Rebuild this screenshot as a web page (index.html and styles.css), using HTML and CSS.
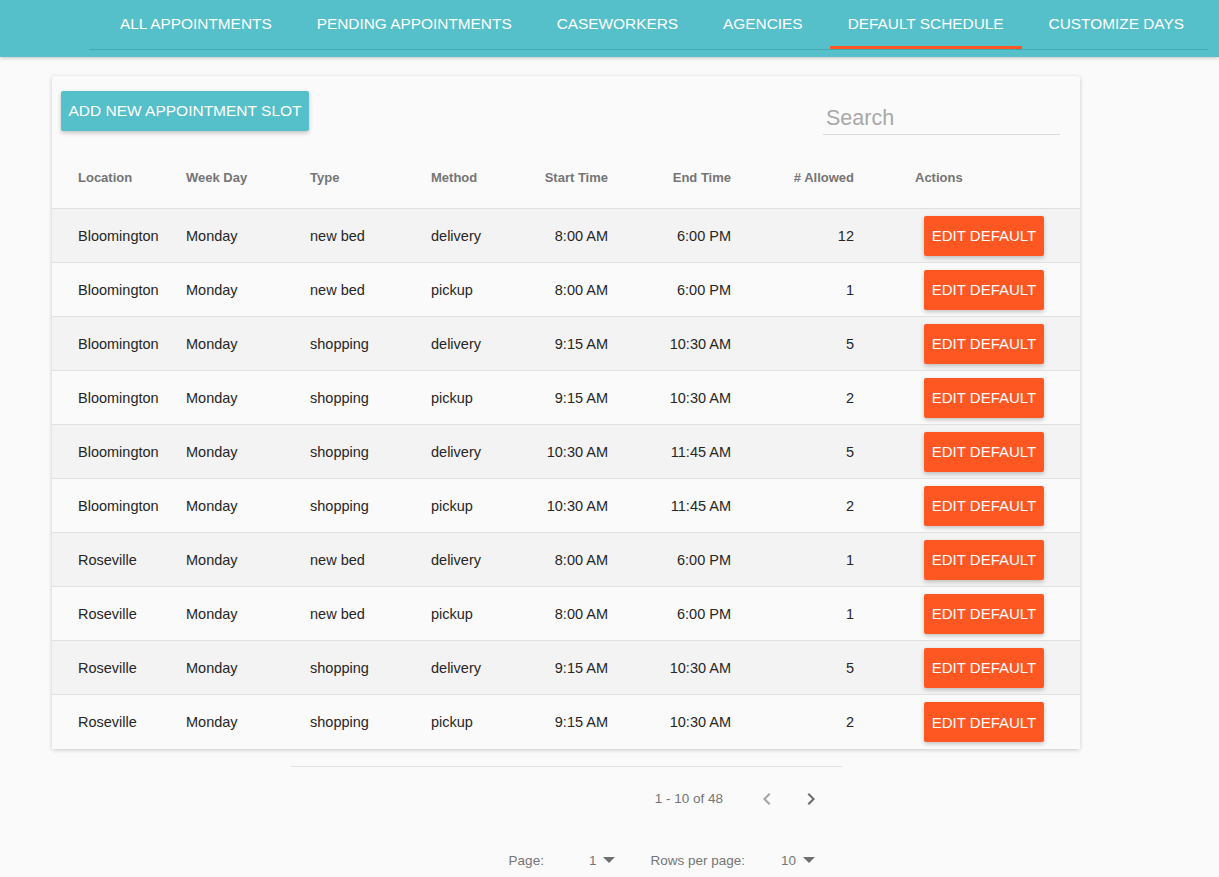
FILE: index.html
```html
<!DOCTYPE html>
<html>
<head>
<meta charset="utf-8">
<link rel="stylesheet" href="styles.css">
</head>
<body>
<header class="appbar">
  <nav class="tabs">
    <a class="tab">All Appointments</a>
    <a class="tab">Pending Appointments</a>
    <a class="tab">Caseworkers</a>
    <a class="tab">Agencies</a>
    <a class="tab active">Default Schedule</a>
    <a class="tab">Customize Days</a>
  </nav>
</header>

<main class="content">
  <section class="card">
    <div class="toolbar">
      <button class="btn btn-teal">Add New Appointment Slot</button>
      <div class="search"><span class="search-placeholder">Search</span></div>
    </div>
    <div class="table">
      <div class="row head">
        <div class="cell">Location</div>
        <div class="cell">Week Day</div>
        <div class="cell">Type</div>
        <div class="cell">Method</div>
        <div class="cell num">Start Time</div>
        <div class="cell num">End Time</div>
        <div class="cell num"># Allowed</div>
        <div class="cell actions">Actions</div>
      </div>
      <div class="row odd"><div class="cell">Bloomington</div><div class="cell">Monday</div><div class="cell">new bed</div><div class="cell">delivery</div><div class="cell num">8:00 AM</div><div class="cell num">6:00 PM</div><div class="cell num">12</div><div class="cell actions"><button class="btn btn-orange">Edit Default</button></div></div>
      <div class="row"><div class="cell">Bloomington</div><div class="cell">Monday</div><div class="cell">new bed</div><div class="cell">pickup</div><div class="cell num">8:00 AM</div><div class="cell num">6:00 PM</div><div class="cell num">1</div><div class="cell actions"><button class="btn btn-orange">Edit Default</button></div></div>
      <div class="row odd"><div class="cell">Bloomington</div><div class="cell">Monday</div><div class="cell">shopping</div><div class="cell">delivery</div><div class="cell num">9:15 AM</div><div class="cell num">10:30 AM</div><div class="cell num">5</div><div class="cell actions"><button class="btn btn-orange">Edit Default</button></div></div>
      <div class="row"><div class="cell">Bloomington</div><div class="cell">Monday</div><div class="cell">shopping</div><div class="cell">pickup</div><div class="cell num">9:15 AM</div><div class="cell num">10:30 AM</div><div class="cell num">2</div><div class="cell actions"><button class="btn btn-orange">Edit Default</button></div></div>
      <div class="row odd"><div class="cell">Bloomington</div><div class="cell">Monday</div><div class="cell">shopping</div><div class="cell">delivery</div><div class="cell num">10:30 AM</div><div class="cell num">11:45 AM</div><div class="cell num">5</div><div class="cell actions"><button class="btn btn-orange">Edit Default</button></div></div>
      <div class="row"><div class="cell">Bloomington</div><div class="cell">Monday</div><div class="cell">shopping</div><div class="cell">pickup</div><div class="cell num">10:30 AM</div><div class="cell num">11:45 AM</div><div class="cell num">2</div><div class="cell actions"><button class="btn btn-orange">Edit Default</button></div></div>
      <div class="row odd"><div class="cell">Roseville</div><div class="cell">Monday</div><div class="cell">new bed</div><div class="cell">delivery</div><div class="cell num">8:00 AM</div><div class="cell num">6:00 PM</div><div class="cell num">1</div><div class="cell actions"><button class="btn btn-orange">Edit Default</button></div></div>
      <div class="row"><div class="cell">Roseville</div><div class="cell">Monday</div><div class="cell">new bed</div><div class="cell">pickup</div><div class="cell num">8:00 AM</div><div class="cell num">6:00 PM</div><div class="cell num">1</div><div class="cell actions"><button class="btn btn-orange">Edit Default</button></div></div>
      <div class="row odd"><div class="cell">Roseville</div><div class="cell">Monday</div><div class="cell">shopping</div><div class="cell">delivery</div><div class="cell num">9:15 AM</div><div class="cell num">10:30 AM</div><div class="cell num">5</div><div class="cell actions"><button class="btn btn-orange">Edit Default</button></div></div>
      <div class="row last"><div class="cell">Roseville</div><div class="cell">Monday</div><div class="cell">shopping</div><div class="cell">pickup</div><div class="cell num">9:15 AM</div><div class="cell num">10:30 AM</div><div class="cell num">2</div><div class="cell actions"><button class="btn btn-orange">Edit Default</button></div></div>
    </div>
  </section>

  <div class="pager">
    <div class="pager-row range-row">
      <span class="range">1 - 10 of 48</span>
      <span class="chev chev-prev"><svg viewBox="0 0 24 24" width="24" height="24"><path d="M15.41 7.41L14 6l-6 6 6 6 1.41-1.41L10.83 12z"/></svg></span>
      <span class="chev chev-next"><svg viewBox="0 0 24 24" width="24" height="24"><path d="M10 6L8.59 7.41 13.17 12l-4.58 4.59L10 18l6-6z"/></svg></span>
    </div>
    <div class="pager-row select-row">
      <span class="plabel">Page:</span>
      <span class="pselect sel-page">1<i class="caret"></i></span>
      <span class="plabel rows-label">Rows per page:</span>
      <span class="pselect sel-rows">10<i class="caret"></i></span>
    </div>
  </div>
</main>
</body>
</html>
```

FILE: styles.css
```css
* { box-sizing: border-box; }

html, body {
  margin: 0;
  padding: 0;
  background: #fafafa;
  font-family: "Liberation Sans", Arial, sans-serif;
  color: #212121;
}

.appbar {
  height: 57px;
  background: #56c0ca;
  box-shadow: 0 1px 4px rgba(0, 0, 0, 0.22);
  position: relative;
  z-index: 2;
}

.tabs {
  display: flex;
  gap: 9px;
  margin-left: 89px;
  width: 1119px;
  height: 50px;
  padding-left: 13px;
  border-bottom: 1px solid #43a8b2;
}

.tab {
  display: flex;
  align-items: center;
  padding: 2px 18px 0 18px;
  height: 49px;
  color: #ffffff;
  font-size: 15.4px;
  text-transform: uppercase;
  border-bottom: 3px solid transparent;
  white-space: nowrap;
}

.tab.active {
  border-bottom-color: #ff5722;
}

.content {
  padding: 19px 0 0 52px;
}

.card {
  width: 1028px;
  background: #fafafa;
  box-shadow: 0 1px 4px rgba(0, 0, 0, 0.2);
  border-radius: 2px;
}

.toolbar {
  display: flex;
  justify-content: space-between;
  align-items: flex-start;
  height: 70px;
  padding: 15px 20px 0 9px;
}

.btn {
  border: none;
  font-family: "Liberation Sans", Arial, sans-serif;
  text-transform: uppercase;
  color: #ffffff;
  border-radius: 2px;
  cursor: pointer;
  box-shadow: 0 2px 4px rgba(0, 0, 0, 0.22);
}

.btn-teal {
  background: #56c0ca;
  height: 40px;
  width: 248px;
  padding: 0;
  font-size: 15.5px;
}

.search {
  width: 237px;
  height: 44px;
  border-bottom: 1px solid #dcdcdc;
  display: flex;
  align-items: flex-end;
  padding: 0 0 3px 3px;
}

.search-placeholder {
  font-size: 21.5px;
  color: #a8a8a8;
}

.row {
  display: grid;
  grid-template-columns: 108px 124px 121px 100px 77px 123px 123px 1fr;
  align-items: center;
  height: 54px;
  padding-left: 26px;
  border-bottom: 1px solid #e0e0e0;
  font-size: 14.5px;
  color: #262626;
  background: #fafafa;
}

.row.odd { background: #f3f3f3; }
.row.last { border-bottom: none; }

.row.head {
  height: 63px;
  font-size: 13px;
  font-weight: bold;
  color: #757575;
  background: #fafafa;
}

.cell { white-space: nowrap; }
.cell.num { text-align: right; }
.cell.actions { padding-left: 61px; }

.btn-orange {
  background: #ff5722;
  width: 120px;
  height: 40px;
  margin-left: 9px;
  padding: 0;
  font-size: 15px;
  display: block;
}

.pager {
  width: 551px;
  margin: 17px 0 0 239px;
  border-top: 1px solid #e0e0e0;
  color: #757575;
  font-size: 13.5px;
}

.pager-row {
  display: flex;
  align-items: center;
  justify-content: flex-end;
}

.range-row {
  height: 63px;
  padding-right: 19px;
}

.range { margin-right: 32px; }

.chev {
  width: 24px;
  height: 24px;
  display: inline-flex;
}

.chev-prev { fill: #a3a3a3; margin-right: 20px; }
.chev-next { fill: #6a6a6a; }

.select-row {
  height: 60px;
  padding-right: 27px;
}

.plabel:first-child { margin-right: 1px; }

.pselect {
  display: inline-flex;
  align-items: center;
  color: #757575;
}

.sel-page { margin-left: 44px; }
.rows-label { margin-left: 35px; }
.sel-rows { margin-left: 36px; }

.caret {
  display: inline-block;
  width: 0;
  height: 0;
  margin-left: 7px;
  border-left: 6px solid transparent;
  border-right: 6px solid transparent;
  border-top: 6px solid #707070;
}
```
